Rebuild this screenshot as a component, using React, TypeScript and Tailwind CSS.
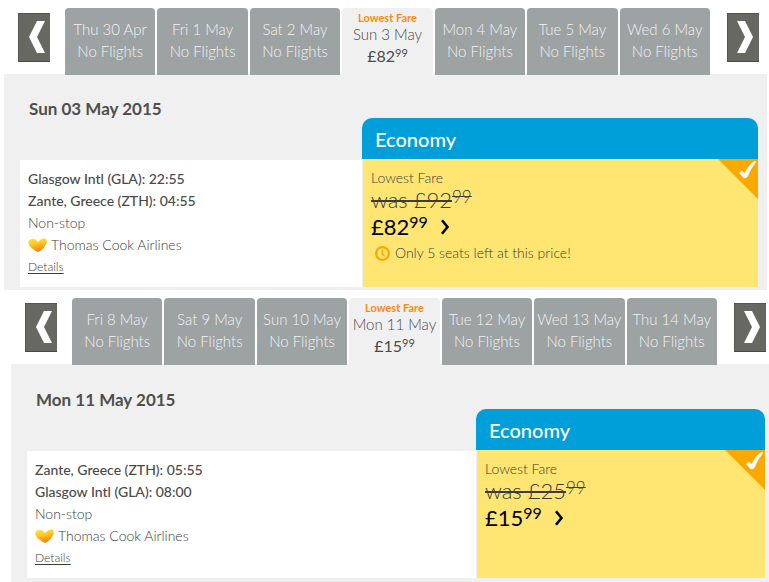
import React from 'react';

type Day = {
  date: string;
  price?: [string, string];
};

type Flight = {
  id: string;
  title: string;
  days: Day[];
  legs: string[];
  was: [string, string];
  now: [string, string];
  seats?: string;
};

const OUTBOUND: Flight = {
  id: 'outbound',
  title: 'Sun 03 May 2015',
  days: [
    { date: 'Thu 30 Apr' },
    { date: 'Fri 1 May' },
    { date: 'Sat 2 May' },
    { date: 'Sun 3 May', price: ['£82', '99'] },
    { date: 'Mon 4 May' },
    { date: 'Tue 5 May' },
    { date: 'Wed 6 May' },
  ],
  legs: ['Glasgow Intl (GLA): 22:55', 'Zante, Greece (ZTH): 04:55'],
  was: ['was £92', '99'],
  now: ['£82', '99'],
  seats: 'Only 5 seats left at this price!',
};

const INBOUND: Flight = {
  id: 'inbound',
  title: 'Mon 11 May 2015',
  days: [
    { date: 'Fri 8 May' },
    { date: 'Sat 9 May' },
    { date: 'Sun 10 May' },
    { date: 'Mon 11 May', price: ['£15', '99'] },
    { date: 'Tue 12 May' },
    { date: 'Wed 13 May' },
    { date: 'Thu 14 May' },
  ],
  legs: ['Zante, Greece (ZTH): 05:55', 'Glasgow Intl (GLA): 08:00'],
  was: ['was £25', '99'],
  now: ['£15', '99'],
};

const ArrowButton: React.FC<{ label: string; points: string }> = ({ label, points }) => (
  <button
    type="button"
    aria-label={label}
    className="mt-[5px] h-[49px] w-8 shrink-0 bg-[#686862] shadow-[inset_1px_1px_0_#555550,inset_0_-1px_0_#4a4a46]"
  >
    <svg viewBox="0 0 32 49" className="h-full w-full" aria-hidden="true">
      <polygon points={points} fill="#fff" />
    </svg>
  </button>
);

const DayTab: React.FC<{ day: Day }> = ({ day }) => {
  if (day.price) {
    return (
      <button
        type="button"
        aria-pressed="true"
        className="flex h-[67px] min-w-0 flex-1 flex-col items-center rounded-t bg-[#f0f0f0] pt-1 whitespace-nowrap text-[#4a4a4a]"
      >
        <span className="text-[11px] leading-3 font-bold text-[#ff8a0c]">Lowest Fare</span>
        <span className="text-[15px] leading-[21px] font-light">{day.date}</span>
        <span className="flex text-[16px] leading-[22px] font-normal">
          {day.price[0]}
          <span className="text-[11px] leading-4">{day.price[1]}</span>
        </span>
      </button>
    );
  }

  return (
    <button
      type="button"
      aria-pressed="false"
      className="flex h-[67px] min-w-0 flex-1 flex-col items-center rounded-t bg-[#9da2a3] pt-[10px] text-[15px] leading-[22px] font-light whitespace-nowrap text-[#f2f3f3]"
    >
      <span>{day.date}</span>
      <span>No Flights</span>
    </button>
  );
};

const HeartLogo: React.FC<{ id: string }> = ({ id }) => (
  <svg viewBox="0 0 19 14" className="h-[14px] w-[19px]" aria-hidden="true">
    <defs>
      <linearGradient id={id} x1="0.3" y1="0" x2="0.55" y2="1">
        <stop offset="0" stopColor="#ffe04a" />
        <stop offset="0.4" stopColor="#fec81e" />
        <stop offset="0.75" stopColor="#fb9a12" />
        <stop offset="1" stopColor="#f07c0c" />
      </linearGradient>
    </defs>
    <path
      d="M0.3 4.2C0.6 1.4 3.6 0.2 6.2 1C8.2 1.6 9.4 3 9.9 4.6C11.4 2.2 13.8 0.4 16.4 0.6C18.6 0.8 19.2 2.8 18.6 4.8C17.6 8.2 14 12.2 11 13.6C10.2 14 9.2 13.8 8.4 13.3C5 11.2 0 7.6 0.3 4.2Z"
      fill={`url(#${id})`}
    />
  </svg>
);

const SelectedCorner: React.FC = () => (
  <svg viewBox="0 0 40 40" className="absolute top-0 right-0 h-10 w-10" aria-hidden="true">
    <polygon points="0,0 40,0 40,40" fill="#f9a900" />
    <path
      d="M21.5 14.2C22 13 23.8 11.8 24.9 12.4C25.7 12.9 26.1 14 26.5 14.7C28.8 10 32 5 36.2 2.6C37.2 2.1 38.4 2.2 37.9 3.2C34 7.6 31.5 12.5 29.4 17.6C28.8 19 25.8 19.4 25 18.3C24 16.8 23 15.4 21.5 14.2Z"
      fill="#fff"
      stroke="#fff"
      strokeWidth="0.5"
    />
  </svg>
);

const FlightSection: React.FC<{
  flight: Flight;
  className: string;
  tabsClass: string;
  panelClass: string;
  fareClass: string;
}> = ({ flight, className, tabsClass, panelClass, fareClass }) => (
  <section className={className}>
    <div className={`relative flex pt-2 pl-[14px] ${tabsClass}`}>
      <ArrowButton label="Previous days" points="19,8 27,8 19,24 27,40 19,40 11,24" />
      <div className="mr-[17px] ml-[15px] flex min-w-0 flex-1 gap-[2px]">
        {flight.days.map((day) => (
          <DayTab key={day.date} day={day} />
        ))}
      </div>
      <ArrowButton label="Next days" points="10,8 18,8 26,24 18,40 10,40 18,24" />
    </div>

    <div className={`-mt-px flex bg-[#f0f0f0] pl-4 ${panelClass}`}>
      {/* Flight details */}
      <div className="flex min-w-0 flex-1 flex-col">
        <h2 className="mb-9 pl-[9px] text-[17px] leading-[30px] font-bold text-[#4f4f4b]">
          {flight.title}
        </h2>
        <div className="flex-1 bg-white pt-2 pl-2 text-[14px] leading-[22px] font-light text-[#3c3c3c]">
          {flight.legs.map((leg) => (
            <p key={leg} className="font-medium text-[#4a4a4a]">
              {leg}
            </p>
          ))}
          <p>Non-stop</p>
          <p className="flex items-center gap-1">
            <HeartLogo id={`heart-${flight.id}`} />
            Thomas Cook Airlines
          </p>
          <a href="#details" className="block w-fit text-[12px] underline underline-offset-2">
            Details
          </a>
        </div>
      </div>

      {/* Fare */}
      <div className={`mt-6 flex shrink-0 flex-col ${fareClass}`}>
        <h3 className="h-[41px] rounded-t-[10px] bg-[#009fda] pl-[13px] text-[20px] leading-[42px] font-medium text-white">
          Economy
        </h3>
        <div className="relative ml-px h-32 bg-[#ffe571] pt-2 pl-2 font-light text-[#3c3c3c]">
          <SelectedCorner />
          <p className="text-[14px] leading-[22px]">Lowest Fare</p>
          <del className="flex text-[22px] leading-[22px] no-underline">
            <span className="line-through decoration-2">{flight.was[0]}</span>
            <span className="text-[17px] leading-4 line-through">{flight.was[1]}</span>
          </del>
          <button type="button" className="flex text-[22px] leading-[32px] font-normal text-black">
            {flight.now[0]}
            <span className="text-[16px] leading-[22px]">{flight.now[1]}</span>
            <svg viewBox="0 0 10 16" className="mt-2 ml-3 h-4 w-[10px]" aria-hidden="true">
              <path d="M2 1.2L7.5 8L2 14.8" fill="none" stroke="#000" strokeWidth="2.6" />
            </svg>
          </button>
          {flight.seats && (
            <p className="flex items-center gap-[5px] pl-1 text-[14px] leading-[20px]">
              <svg viewBox="0 0 15 15" className="h-[15px] w-[15px]" aria-hidden="true">
                <circle cx="7.5" cy="7.5" r="6.3" fill="none" stroke="#f9a900" strokeWidth="2.2" />
                <path d="M7.2 3.6V8L9.6 9.6" fill="none" stroke="#f9a900" strokeWidth="1.5" />
              </svg>
              {flight.seats}
            </p>
          )}
        </div>
      </div>
    </div>
  </section>
);

const App: React.FC = () => (
  <main className="bg-white font-['Lato','Open_Sans',sans-serif]">
    <FlightSection
      flight={OUTBOUND}
      className="mr-[2px] ml-1"
      tabsClass="pr-2"
      panelClass="pt-5 pr-[9px] pb-[3px]"
      fareClass="w-[396px]"
    />
    <FlightSection
      flight={INBOUND}
      className="ml-[11px]"
      tabsClass="pr-[3px]"
      panelClass="pt-[21px] pr-1 pb-1"
      fareClass="w-[289px]"
    />
  </main>
);

export default App;
